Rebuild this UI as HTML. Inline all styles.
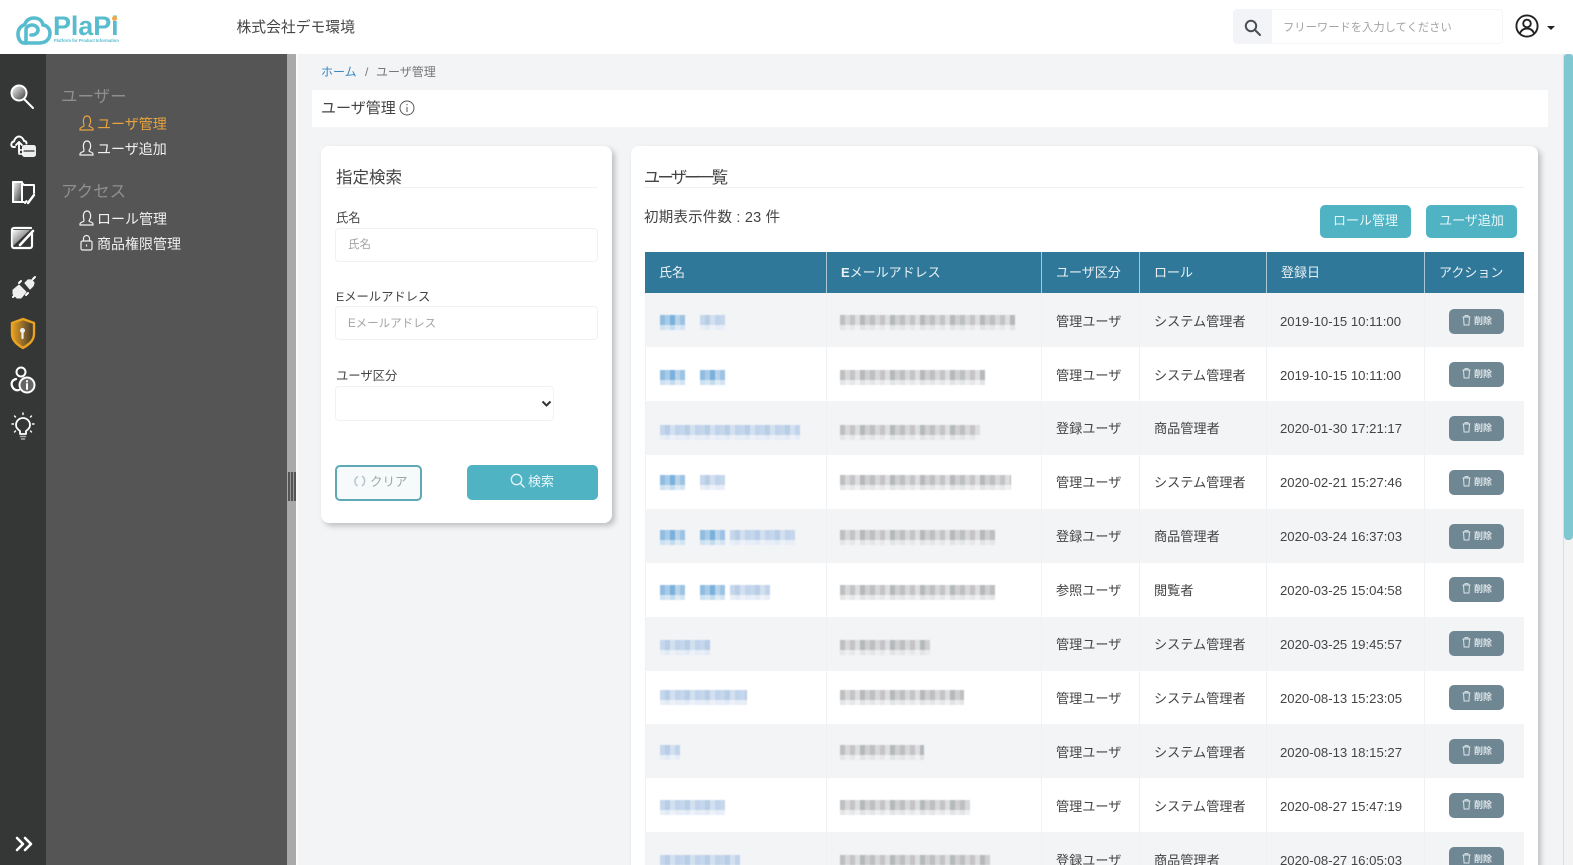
<!DOCTYPE html>
<html lang="ja"><head><meta charset="utf-8"><title>ユーザ管理</title>
<style>
*{box-sizing:border-box}
html,body{margin:0;padding:0;width:1573px;height:865px;overflow:hidden;background:#f3f4f6}
body{position:relative;font-family:"Liberation Sans","Noto Sans CJK JP",sans-serif;color:#444;font-size:13px}
.a{position:absolute;white-space:nowrap;line-height:1}
svg{position:absolute;overflow:visible}
.side{font-size:14px;color:#f0f0f0}
.hd{font-size:16.5px;color:#8f8f8f}
.card{position:absolute;background:#fff;border-radius:8px;box-shadow:3px 3px 6px rgba(0,0,0,.22)}
.inp{position:absolute;border:1px solid #f0f1f3;border-radius:4px;background:#fff;font:11.5px "Liberation Sans","Noto Sans CJK JP",sans-serif;padding:0 11px;color:#555;outline:0}
.inp::placeholder{color:#a4a4a4;opacity:1}
.btn{position:absolute;background:#4fb3c4;color:#e9f6f8;border-radius:5px;text-align:center;font-size:13px}
.th{position:absolute;top:252px;height:41px;background:#30789a;color:#e8f0f4;font-size:13px;line-height:41px;border-right:1px solid #a9c8d5;padding-left:14px;white-space:nowrap}
.row{position:absolute;left:645px;width:879px;height:54px}
.s{background:#f3f4f6}
.vl{position:absolute;width:1px;top:293px;height:572px;background:#f0f1f3}
.c{position:absolute;font-size:13.15px;color:#444;line-height:1;white-space:nowrap;margin:1px 0 0 1px}
.t{margin-left:0}
.d{position:absolute;left:1449px;width:55px;height:25px;border-radius:5px;background:#6f8793;color:#dde5e8;font-size:9px;line-height:25px;padding-left:25px;font-weight:bold}
.d svg{left:13px;top:6px}
.b,.p,.e{position:absolute;height:15px;filter:blur(.5px)}
.b{background:linear-gradient(rgba(255,255,255,0) 10px,rgba(255,255,255,.55) 10px),repeating-linear-gradient(90deg,#8fbde2 0 5px,#a9cbe8 5px 10px,#79b0dc 10px 15px,#b8d3ea 15px 20px,#9cc3e4 20px 25px)}
.p{background:linear-gradient(rgba(255,255,255,0) 10px,rgba(255,255,255,.6) 10px),repeating-linear-gradient(90deg,#c5d7ec 0 5px,#b8cde6 5px 10px,#d3e0ef 10px 15px,#c0d3ea 15px 20px)}
.e{background:linear-gradient(rgba(255,255,255,0) 10px,rgba(255,255,255,.6) 10px),repeating-linear-gradient(90deg,#bdbfc1 0 5px,#d6d8d9 5px 10px,#c6c3c7 10px 15px,#dcdedf 15px 20px,#b6b9bb 20px 25px,#d0d0d3 25px 30px)}
</style></head><body>

<!-- header -->
<div style="position:absolute;left:0;top:0;width:1573px;height:54px;background:#fff"></div>
<svg style="left:0;top:0" width="130" height="54" fill="none" stroke="#57bccd" stroke-width="3.6" stroke-linecap="round" stroke-linejoin="round">
<path d="M24 43h15c9 0 11-6 11-10 0-5-4-8-7-8-1-5-5-7-9-7-5 0-8 3-9 6"/>
<path d="M24 43c-4 0-6-5-6-9 0-5 3-8 6-9"/>
<path d="M26 43V30c0-3 3-5 6-5s6 2 6 5-3 5-6 5h-1"/>
</svg>
<div class="a" style="left:53px;top:13px;font-size:27px;font-weight:bold;color:#57bccd;letter-spacing:-.1px">PlaPi</div>
<div style="position:absolute;left:112px;top:16px;width:5px;height:5px;border-radius:50%;background:#f0a94a"></div>
<div class="a" style="left:54px;top:39px;font-size:4.2px;color:#57bccd;font-weight:bold">Platform for Product Information</div>
<div class="a" style="left:236.5px;top:21px;font-size:14.8px;color:#444">株式会社デモ環境</div>

<div style="position:absolute;left:1233px;top:9px;width:38px;height:35px;background:#f3f4f7;border-radius:4px 0 0 4px"></div>
<svg style="left:1244px;top:19px" width="18" height="18" fill="none" stroke="#4a4f54" stroke-width="2"><circle cx="7" cy="7" r="5.2"/><path d="M11 11l5 5" stroke-linecap="round"/></svg>
<input class="inp" style="left:1271px;top:9px;width:232px;height:35px;border:1px solid #f5f5f6;border-radius:0 4px 4px 0;font-size:11.3px;padding-top:2px" placeholder="フリーワードを入力してください">
<svg style="left:1515px;top:14px" width="24" height="24" fill="none" stroke="#222" stroke-width="1.9"><circle cx="12" cy="12" r="10.6"/><circle cx="12" cy="9.5" r="3.8"/><path d="M4.8 19.5c1.5-3.6 4-5 7.2-5s5.700 1.400 7.200 5"/></svg>
<div style="position:absolute;left:1547px;top:26px;border:4px solid transparent;border-top-color:#222;border-bottom:0"></div>

<!-- sidebar -->
<div style="position:absolute;left:0;top:54px;width:46px;height:811px;background:#353636"></div>
<div style="position:absolute;left:46px;top:54px;width:241px;height:811px;background:#555"></div>
<div style="position:absolute;left:287px;top:54px;width:9px;height:811px;background:#a9a9a9"></div>
<div style="position:absolute;left:296px;top:54px;width:2px;height:811px;background:#fafafa"></div>
<div style="position:absolute;left:288px;top:472px;width:8px;height:29px;background:repeating-linear-gradient(90deg,#555 0 2px,#999 2px 3px)"></div>

<svg style="left:0;top:54px" width="46" height="811" fill="none" stroke="#fff" stroke-width="2" stroke-linecap="round" stroke-linejoin="round">
<defs><linearGradient id="g" x1="0" y1="0" x2="1" y2="1"><stop offset="0" stop-color="#fff"/><stop offset="1" stop-color="#333"/></linearGradient>
<linearGradient id="o" x1="0" y1="0" x2="1" y2="0"><stop offset="0" stop-color="#e8a020"/><stop offset="1" stop-color="#3a3530"/></linearGradient></defs>
<!-- search -->
<circle cx="19" cy="39" r="7.500" fill="url(#g)"/><path d="M24 45l9 9" stroke-width="2"/>
<!-- cloud db -->
<path d="M15 93h-1.500c-2 0-2.500-2-2-3.500.5-1.500 1.500-2 2.500-2 .5-3 3-5 5-5s4.500 2 5 4.500c2 0 2.500 1 2.500 2.500M19 98V88m-3 3l3-3 3 3" stroke-width="1.900"/>
<rect x="23" y="92" width="12" height="10" rx="1.500" fill="#eee" stroke="#eee"/><path d="M24 97h10" stroke="#333" stroke-width="1.200"/><path d="M19 98v2h4M19 96h4" stroke-width="1.500"/>
<!-- folder -->
<path d="M13 148v-20h8l3 3h10v8M13 148h11" stroke-width="2"/><path d="M13 128h9v20h-9z" fill="url(#g)" stroke="#fff"/><path d="M28 149l6-8" stroke-width="2.400"/><path d="M25 149l1.500-2"/>
<!-- edit -->
<path d="M32 180v12a2 2 0 0 1-2 2H14a2 2 0 0 1-2-2v-2M12 190v-14a2 2 0 0 1 2-2h17" stroke-width="2.200"/><path d="M12 176h18L13 192z" fill="url(#g)" stroke="none"/><path d="M20 191l13-14" stroke-width="2.600"/>
<!-- plug -->
<path d="M14 237l6-5 7 7-5 6h-4l-4-4z" transform="translate(-1 -1)" fill="#eee" stroke="#eee" stroke-width="1"/><path d="M25 229l3-3 4 0 2 3-1 3-3 3z" fill="#eee" stroke="#eee" stroke-width="1.200"/><path d="M14 242l-1 1M33 225l2-2M19 229l2-2M26 241l2-2" stroke-width="2"/>
<!-- shield -->
<path d="M23 265l11 4v11c0 7-6 11-11 14-5-3-11-7-11-14v-11z" fill="url(#o)" stroke="#eaa31f" stroke-width="2.400"/><circle cx="22.500" cy="276.500" r="2.500" fill="#eee" stroke="none"/><path d="M22.500 277v7" stroke="#eee" stroke-width="2.200"/>
<!-- users-info -->
<circle cx="21" cy="318" r="4.500"/><path d="M16 325c-4 1-5 4-4 7 1 3 4 5 7 4" stroke-width="2.200"/><circle cx="27" cy="331" r="7.500" fill="#666" stroke-width="2"/><path d="M27 330v5M27 327v.5" stroke-width="2"/>
<!-- bulb -->
<path d="M20 378c-3-2-4-4-4-6a7 7 0 0 1 14 0c0 2-1 4-4 6v3h-6z" stroke-width="1.800" transform="translate(0 -1)"/><path d="M20.500 382.500h5M21.500 385h3" stroke="#aaa" stroke-width="1.600"/><path d="M23 359v1.500M14.500 362l1 1M31.500 362l-1 1M12 370h1.500M34 370h-1.500M14.500 378l1-1M31.500 378l-1-1" stroke-width="1.400"/>
<!-- chevrons -->
<path d="M18 781l6 6-6 6M26 781l6 6-6 6" stroke-width="2.600" transform="translate(-1 3)"/>
</svg>

<div class="a hd" style="left:61px;top:89px">ユーザー</div>
<div class="a side" style="left:97px;top:117px;color:#e8a33d">ユーザ管理</div>
<div class="a side" style="left:97px;top:142px">ユーザ追加</div>
<div class="a hd" style="left:61px;top:184px">アクセス</div>
<div class="a side" style="left:97px;top:212px">ロール管理</div>
<div class="a side" style="left:97px;top:237px">商品権限管理</div>
<svg style="left:79px;top:115px" width="16" height="140" fill="none" stroke="#f0f0f0" stroke-width="1.200">
<g stroke="#e8a33d"><path d="M4.500 7.500C4 3.500 5.500 1 8 1s4 2.500 3.500 6.500c-.2 1.500-1.500 2.500-1.500 3.500 0 .8 4 1 4 3v1H1v-1c0-2 4-2.200 4-3 0-1-.3-2-.5-3.500z"/></g>
<path d="M4.500 32.500C4 28.500 5.500 26 8 26s4 2.500 3.500 6.500c-.2 1.500-1.500 2.500-1.500 3.500 0 .8 4 1 4 3v1H1v-1c0-2 4-2.200 4-3 0-1-.3-2-.5-3.500z"/>
<path d="M4.500 102.500C4 98.500 5.500 96 8 96s4 2.500 3.500 6.500c-.2 1.500-1.500 2.500-1.500 3.500 0 .8 4 1 4 3v1H1v-1c0-2 4-2.200 4-3 0-1-.3-2-.5-3.500z"/>
<rect x="2" y="126" width="11" height="9" rx="1.500"/><path d="M4.500 126v-2.500a3 3 0 0 1 6 0v2.500M7.500 129.500v2"/>
</svg>

<!-- main top -->
<div class="a" style="left:321px;top:66px;font-size:12px;color:#3a86c0">ホーム</div>
<div class="a" style="left:365px;top:66px;font-size:12px;color:#777">/</div>
<div class="a" style="left:376px;top:66px;font-size:12px;color:#777">ユーザ管理</div>
<div style="position:absolute;left:312px;top:90px;width:1236px;height:37px;background:#fff"></div>
<div class="a" style="left:321px;top:101px;font-size:15px;color:#444">ユーザ管理</div>
<svg style="left:399px;top:100px" width="16" height="16" fill="none" stroke="#555" stroke-width="1"><circle cx="8" cy="8" r="7"/><path d="M8 7v5M8 4v1.200"/></svg>

<!-- search card -->
<div class="card" style="left:321px;top:146px;width:291px;height:377px"></div>
<div class="a" style="left:336px;top:170px;font-size:16.5px;color:#444">指定検索</div>
<div style="position:absolute;left:336px;top:187px;width:262px;height:1px;background:#f0f1f3"></div>
<div class="a" style="left:336px;top:212px;font-size:12.3px">氏名</div>
<input class="inp" style="left:335px;top:228px;width:263px;height:34px;padding-left:12px" placeholder="氏名">
<div class="a" style="left:336px;top:291px;font-size:12.3px">Eメールアドレス</div>
<input class="inp" style="left:335px;top:306px;width:263px;height:34px;padding-left:12px;padding-top:1px" placeholder="Eメールアドレス">
<div class="a" style="left:336px;top:370px;font-size:12.3px">ユーザ区分</div>
<div class="inp" style="left:335px;top:386px;width:219px;height:35px"></div>
<svg style="left:541px;top:400px" width="12" height="8" fill="none" stroke="#333" stroke-width="2"><path d="M1.500 1.500l4 4 4-4"/></svg>
<div style="position:absolute;left:335px;top:465px;width:87px;height:36px;border:2px solid #5fa9b6;border-radius:5px;background:#f7fafa"></div>
<svg style="left:354px;top:475px" width="12" height="14" fill="none" stroke="#b5c5c9" stroke-width="1.500"><path d="M4 1.500C0 3.500 0 8.500 3.500 11M8 1c3.500 2.500 3.500 7.500 0 10"/></svg>
<div class="a" style="left:370px;top:476px;font-size:12.5px;color:#9aa6a9">クリア</div>
<div class="btn" style="left:467px;top:465px;width:131px;height:35px"></div>
<svg style="left:510px;top:473px" width="16" height="16" fill="none" stroke="#e9f6f8" stroke-width="1.300"><circle cx="6.500" cy="6.500" r="5.200"/><path d="M10.500 10.500l4 4"/></svg>
<div class="a" style="left:528px;top:475px;font-size:13px;color:#e9f6f8">検索</div>

<!-- list card -->
<div class="card" style="left:631px;top:146px;width:907px;height:740px"></div>
<div class="a" style="left:644px;top:170px;font-size:16.5px;color:#444;font-feature-settings:'palt';letter-spacing:-2.6px">ユーザー一覧</div>
<div style="position:absolute;left:644px;top:187px;width:880px;height:1px;background:#f0f1f3"></div>
<div class="a" style="left:644px;top:211px;font-size:14.5px;color:#444;letter-spacing:.2px">初期表示件数 : 23 件</div>
<div class="btn" style="left:1320px;top:205px;width:91px;height:33px;line-height:32px">ロール管理</div>
<div class="btn" style="left:1426px;top:205px;width:91px;height:33px;line-height:32px">ユーザ追加</div>

<!-- table -->
<div class="th" style="left:645px;width:182px">氏名</div>
<div class="th" style="left:827px;width:215px"><b>E</b>メールアドレス</div>
<div class="th" style="left:1042px;width:98px">ユーザ区分</div>
<div class="th" style="left:1140px;width:127px">ロール</div>
<div class="th" style="left:1267px;width:158px">登録日</div>
<div class="th" style="left:1425px;width:99px;border-right:0">アクション</div>

<div class="row s" style="top:293px"></div>
<div class="row" style="top:347px;background:#fff"></div>
<div class="row s" style="top:401px"></div>
<div class="row" style="top:455px;background:#fff"></div>
<div class="row s" style="top:509px"></div>
<div class="row" style="top:563px;background:#fff"></div>
<div class="row s" style="top:617px"></div>
<div class="row" style="top:671px;background:#fff"></div>
<div class="row s" style="top:724px"></div>
<div class="row" style="top:778px;background:#fff"></div>
<div class="row s" style="top:832px;height:33px"></div>
<div class="vl" style="left:645px"></div><div class="vl" style="left:826px"></div><div class="vl" style="left:1041px"></div><div class="vl" style="left:1139px"></div><div class="vl" style="left:1266px"></div><div class="vl" style="left:1424px"></div>

<!-- blurred cells -->
<div class="b" style="left:660px;top:315px;width:25px"></div><div class="p" style="left:700px;top:315px;width:25px"></div><div class="e" style="left:840px;top:315px;width:175px"></div>
<div class="b" style="left:660px;top:370px;width:25px"></div><div class="b" style="left:700px;top:370px;width:25px"></div><div class="e" style="left:840px;top:370px;width:145px"></div>
<div class="p" style="left:660px;top:425px;width:140px"></div><div class="e" style="left:840px;top:425px;width:140px"></div>
<div class="b" style="left:660px;top:475px;width:25px"></div><div class="p" style="left:700px;top:475px;width:25px"></div><div class="e" style="left:840px;top:475px;width:171px"></div>
<div class="b" style="left:660px;top:530px;width:25px"></div><div class="b" style="left:700px;top:530px;width:25px"></div><div class="p" style="left:730px;top:530px;width:65px"></div><div class="e" style="left:840px;top:530px;width:155px"></div>
<div class="b" style="left:660px;top:585px;width:25px"></div><div class="b" style="left:700px;top:585px;width:25px"></div><div class="p" style="left:730px;top:585px;width:40px"></div><div class="e" style="left:840px;top:585px;width:155px"></div>
<div class="p" style="left:660px;top:640px;width:50px"></div><div class="e" style="left:840px;top:640px;width:90px"></div>
<div class="p" style="left:660px;top:690px;width:87px"></div><div class="e" style="left:840px;top:690px;width:124px"></div>
<div class="p" style="left:660px;top:745px;width:20px"></div><div class="e" style="left:840px;top:745px;width:84px"></div>
<div class="p" style="left:660px;top:800px;width:65px"></div><div class="e" style="left:840px;top:800px;width:130px"></div>
<div class="p" style="left:660px;top:855px;width:80px"></div><div class="e" style="left:840px;top:855px;width:150px"></div>

<!-- type / role / date -->
<div class="c" style="left:1055px;top:314px">管理ユーザ</div><div class="c" style="left:1153px;top:314px">システム管理者</div><div class="c t" style="left:1280px;top:314px">2019-10-15 10:11:00</div>
<div class="c" style="left:1055px;top:368px">管理ユーザ</div><div class="c" style="left:1153px;top:368px">システム管理者</div><div class="c t" style="left:1280px;top:368px">2019-10-15 10:11:00</div>
<div class="c" style="left:1055px;top:421px">登録ユーザ</div><div class="c" style="left:1153px;top:421px">商品管理者</div><div class="c t" style="left:1280px;top:421px">2020-01-30 17:21:17</div>
<div class="c" style="left:1055px;top:475px">管理ユーザ</div><div class="c" style="left:1153px;top:475px">システム管理者</div><div class="c t" style="left:1280px;top:475px">2020-02-21 15:27:46</div>
<div class="c" style="left:1055px;top:529px">登録ユーザ</div><div class="c" style="left:1153px;top:529px">商品管理者</div><div class="c t" style="left:1280px;top:529px">2020-03-24 16:37:03</div>
<div class="c" style="left:1055px;top:583px">参照ユーザ</div><div class="c" style="left:1153px;top:583px">閲覧者</div><div class="c t" style="left:1280px;top:583px">2020-03-25 15:04:58</div>
<div class="c" style="left:1055px;top:637px">管理ユーザ</div><div class="c" style="left:1153px;top:637px">システム管理者</div><div class="c t" style="left:1280px;top:637px">2020-03-25 19:45:57</div>
<div class="c" style="left:1055px;top:691px">管理ユーザ</div><div class="c" style="left:1153px;top:691px">システム管理者</div><div class="c t" style="left:1280px;top:691px">2020-08-13 15:23:05</div>
<div class="c" style="left:1055px;top:745px">管理ユーザ</div><div class="c" style="left:1153px;top:745px">システム管理者</div><div class="c t" style="left:1280px;top:745px">2020-08-13 18:15:27</div>
<div class="c" style="left:1055px;top:799px">管理ユーザ</div><div class="c" style="left:1153px;top:799px">システム管理者</div><div class="c t" style="left:1280px;top:799px">2020-08-27 15:47:19</div>
<div class="c" style="left:1055px;top:853px">登録ユーザ</div><div class="c" style="left:1153px;top:853px">商品管理者</div><div class="c t" style="left:1280px;top:853px">2020-08-27 16:05:03</div>

<!-- delete buttons -->
<div class="d" style="top:309px"><svg width="9" height="11" fill="none" stroke="#dde5e8" stroke-width="1"><path d="M.5 2h8M3 2V.6h3V2M1.500 2l.6 8h4.800l.6-8"/></svg>削除</div>
<div class="d" style="top:362px"><svg width="9" height="11" fill="none" stroke="#dde5e8" stroke-width="1"><path d="M.5 2h8M3 2V.6h3V2M1.500 2l.6 8h4.800l.6-8"/></svg>削除</div>
<div class="d" style="top:416px"><svg width="9" height="11" fill="none" stroke="#dde5e8" stroke-width="1"><path d="M.5 2h8M3 2V.6h3V2M1.500 2l.6 8h4.800l.6-8"/></svg>削除</div>
<div class="d" style="top:470px"><svg width="9" height="11" fill="none" stroke="#dde5e8" stroke-width="1"><path d="M.5 2h8M3 2V.6h3V2M1.500 2l.6 8h4.800l.6-8"/></svg>削除</div>
<div class="d" style="top:524px"><svg width="9" height="11" fill="none" stroke="#dde5e8" stroke-width="1"><path d="M.5 2h8M3 2V.6h3V2M1.500 2l.6 8h4.800l.6-8"/></svg>削除</div>
<div class="d" style="top:577px"><svg width="9" height="11" fill="none" stroke="#dde5e8" stroke-width="1"><path d="M.5 2h8M3 2V.6h3V2M1.500 2l.6 8h4.800l.6-8"/></svg>削除</div>
<div class="d" style="top:631px"><svg width="9" height="11" fill="none" stroke="#dde5e8" stroke-width="1"><path d="M.5 2h8M3 2V.6h3V2M1.500 2l.6 8h4.800l.6-8"/></svg>削除</div>
<div class="d" style="top:685px"><svg width="9" height="11" fill="none" stroke="#dde5e8" stroke-width="1"><path d="M.5 2h8M3 2V.6h3V2M1.500 2l.6 8h4.800l.6-8"/></svg>削除</div>
<div class="d" style="top:739px"><svg width="9" height="11" fill="none" stroke="#dde5e8" stroke-width="1"><path d="M.5 2h8M3 2V.6h3V2M1.500 2l.6 8h4.800l.6-8"/></svg>削除</div>
<div class="d" style="top:793px"><svg width="9" height="11" fill="none" stroke="#dde5e8" stroke-width="1"><path d="M.5 2h8M3 2V.6h3V2M1.500 2l.6 8h4.800l.6-8"/></svg>削除</div>
<div class="d" style="top:847px"><svg width="9" height="11" fill="none" stroke="#dde5e8" stroke-width="1"><path d="M.5 2h8M3 2V.6h3V2M1.500 2l.6 8h4.800l.6-8"/></svg>削除</div>

<!-- scrollbar -->
<div style="position:absolute;left:1563px;top:54px;width:10px;height:811px;background:#f3f3f4;border-left:1px solid #ddd"></div>
<div style="position:absolute;left:1564px;top:54px;width:9px;height:486px;background:#7fc7d1;border-radius:3px 3px 4px 4px"></div>
</body></html>
